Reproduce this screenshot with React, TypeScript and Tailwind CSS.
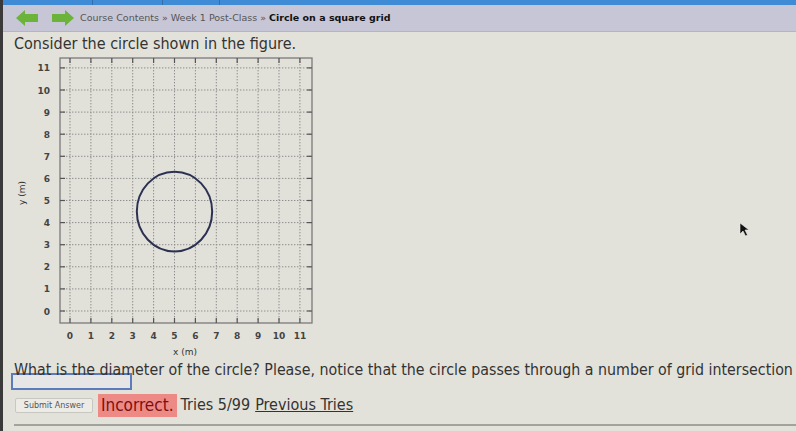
import React from 'react';

const X0 = 60;
const DX = 20.9;
const Y0 = 256;
const DY = 22.1;

const ticks = Array.from({ length: 12 }, (_, i) => i);

function GridChart() {
  const left = 50;
  const right = 302;
  const top = 3;
  const bottom = 268;
  return (
    <svg width="310" height="305" viewBox="0 0 310 305" className="block">
      <rect x={left} y={top} width={right - left} height={bottom - top} fill="#e1e0d9" stroke="#7a7a7a" strokeWidth="1.3" />
      {ticks.map((i) => {
        const x = X0 + i * DX;
        const y = Y0 - i * DY;
        return (
          <g key={i}>
            <line x1={x} y1={top} x2={x} y2={bottom} stroke="#8d8d8d" strokeWidth="1" strokeDasharray="1.4 1.6" />
            <line x1={left} y1={y} x2={right} y2={y} stroke="#8d8d8d" strokeWidth="1" strokeDasharray="1.4 1.6" />
            <line x1={x} y1={top} x2={x} y2={top + 5} stroke="#555" strokeWidth="1.2" />
            <line x1={x} y1={bottom - 5} x2={x} y2={bottom} stroke="#555" strokeWidth="1.2" />
            <line x1={left} y1={y} x2={left + 5} y2={y} stroke="#555" strokeWidth="1.2" />
            <line x1={right - 5} y1={y} x2={right} y2={y} stroke="#555" strokeWidth="1.2" />
            <text x={x} y={284} textAnchor="middle" fontSize="9" fontWeight="bold" fill="#444" fontFamily="'DejaVu Sans', sans-serif">
              {i}
            </text>
            <text x={40} y={y + 3.5} textAnchor="end" fontSize="9" fontWeight="bold" fill="#444" fontFamily="'DejaVu Sans', sans-serif">
              {i}
            </text>
          </g>
        );
      })}
      <ellipse cx={X0 + 5 * DX} cy={Y0 - 4.5 * DY} rx={1.803 * DX} ry={1.803 * DY} fill="none" stroke="#2b3152" strokeWidth="2" />
      <text x={175} y={300} textAnchor="middle" fontSize="9" fill="#333" fontFamily="'DejaVu Sans', sans-serif">
        x (m)
      </text>
      <text x={15} y={138} textAnchor="middle" fontSize="9" fill="#333" fontFamily="'DejaVu Sans', sans-serif" transform="rotate(-90 15 138)">
        y (m)
      </text>
    </svg>
  );
}

function Arrow({ dir }: { dir: 'left' | 'right' }) {
  return (
    <svg width="24" height="18" viewBox="0 0 24 18">
      <path
        d={dir === 'left' ? 'M1 9 L10 1 L10 5 L23 5 L23 13 L10 13 L10 17 Z' : 'M23 9 L14 1 L14 5 L1 5 L1 13 L14 13 L14 17 Z'}
        fill="#6cb33a"
      />
    </svg>
  );
}

export default function App() {
  const font = { fontFamily: "'DejaVu Sans Condensed', 'DejaVu Sans', sans-serif" };
  return (
    <div className="relative w-[796px] h-[431px] overflow-hidden bg-[#e3e2da] border-l-[3px] border-[#3a3a3a]">
      {/* tab strip */}
      <div className="h-[5px] bg-[#3f8bd6] flex">
        <div className="w-[90px] border-r border-[#2f6fb0]" />
        <div className="w-[70px] border-r border-[#2f6fb0]" />
        <div className="w-[57px] border-r border-[#2f6fb0]" />
      </div>

      {/* breadcrumb */}
      <div className="h-[27px] bg-[#c7c6d7] border-b border-[#b5b4c4] flex items-center pl-[12px] gap-[12px]">
        <Arrow dir="left" />
        <Arrow dir="right" />
        <div className="text-[9.5px] text-[#555] -ml-[7px]" style={{ fontFamily: "'DejaVu Sans', sans-serif" }}>
          Course Contents » Week 1 Post-Class » <span className="font-bold text-[#111]">Circle on a square grid</span>
        </div>
      </div>

      <div className="pl-[11px]" style={font}>
        <h1 className="text-[16px] leading-[18px] text-[#333] pt-[3px]">Consider the circle shown in the figure.</h1>

        <div className="-ml-[4px] mt-[2px]">
          <GridChart />
        </div>

        <p className="text-[15.8px] leading-[17px] text-[#333] whitespace-nowrap mt-[1px]">
          What is the diameter of the circle? Please, notice that the circle passes through a number of grid intersection
        </p>
        <div className="w-[121px] h-[17px] border-2 border-[#5b7bbd] bg-[#e6e6e6] -mt-[5px] -ml-[3px]" />

        <div className="flex items-center mt-[3px] text-[16px] text-[#333]">
          <button className="ml-[1px] h-[15px] w-[78px] text-[8px] leading-[13px] text-[#555] bg-[#ecebe6] border border-[#c8c8c2] rounded-[2px]" style={{ fontFamily: "'DejaVu Sans', sans-serif" }}>
            Submit Answer
          </button>
          <span className="ml-[5px] bg-[#ee8a86] text-[#7a1010] px-[3px] h-[23px] leading-[23px] text-[17px]">Incorrect.</span>
          <span className="ml-[4px]">Tries 5/99</span>
          <span className="ml-[5px] underline">Previous Tries</span>
        </div>

        <div className="mt-[7px] h-[2px] bg-[#a3a29c]" />
      </div>

      {/* mouse cursor */}
      <svg className="absolute left-[736px] top-[222px]" width="12" height="15" viewBox="0 0 12 15">
        <path d="M1 1 L1 12 L4 9 L6.5 14 L8.5 13 L6 8 L10 8 Z" fill="#111" stroke="#eee" strokeWidth="0.6" />
      </svg>
    </div>
  );
}
